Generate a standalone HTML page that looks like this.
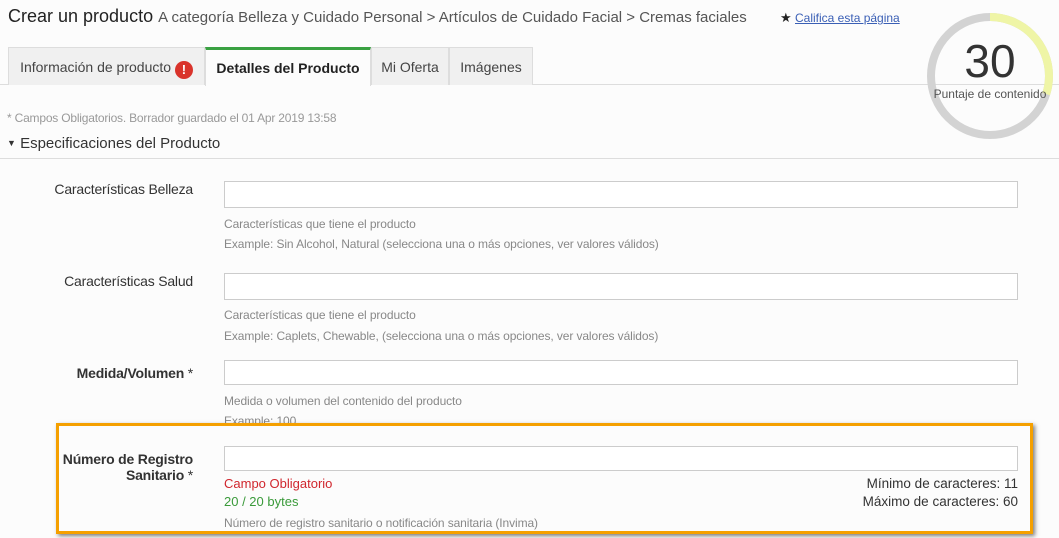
<!DOCTYPE html>
<html><head><meta charset="utf-8"><style>
*{margin:0;padding:0;box-sizing:border-box}
body{width:1059px;height:538px;overflow:hidden;background:#fcfcfc;font-family:"Liberation Sans",sans-serif;color:#333;position:relative}
.a{position:absolute;white-space:nowrap}
.lbl{position:absolute;right:866px;font-size:14px;color:#333;text-align:right;letter-spacing:-0.2px}
.inp{position:absolute;left:224px;width:794px;height:27px;border:1px solid #ccc;background:#fff}
.hint{position:absolute;left:224px;font-size:12px;color:#888;white-space:nowrap;letter-spacing:-0.1px}
.tab{position:absolute;top:47px;height:38px;border:1px solid #ddd;border-bottom:none;background:#f0f0f0;font-size:14px;color:#444;padding-top:11px;text-align:center}
</style></head><body>
<div class="a" style="left:8px;top:6px;font-size:18px;color:#222">Crear un producto <span style="font-size:15px;color:#555">A categoría Belleza y Cuidado Personal &gt; Artículos de Cuidado Facial &gt; Cremas faciales</span></div>
<div class="a" style="left:780px;top:10px;font-size:12px"><span style="color:#222;font-size:13px">★</span> <span style="color:#3a5fb5;text-decoration:underline">Califica esta página</span></div>

<div class="a" style="left:0;top:84px;width:1059px;height:1px;background:#ddd"></div>
<div class="tab" style="left:8px;width:197px">Información de producto <span style="display:inline-block;width:18px;height:18px;border-radius:50%;background:#d9332b;color:#fff;font-weight:bold;font-size:13px;line-height:18px;vertical-align:-2px">!</span></div>
<div class="tab" style="left:205px;width:166px;background:#fcfcfc;border-top:3px solid #3aa142;font-weight:bold;color:#222;padding-top:10px;height:39px">Detalles del Producto</div>
<div class="tab" style="left:371px;width:78px">Mi Oferta</div>
<div class="tab" style="left:449px;width:84px">Imágenes</div>

<svg class="a" style="left:922px;top:8px" width="136" height="136" viewBox="0 0 136 136">
<circle cx="68" cy="68" r="59" fill="none" stroke="#d3d3d3" stroke-width="8"/>
<circle cx="68" cy="68" r="59" fill="none" stroke="#eff5a6" stroke-width="8" stroke-dasharray="111 400" transform="rotate(-90 68 68)"/>
</svg>
<div class="a" style="left:922px;top:34px;width:136px;text-align:center;font-size:46px;color:#333">30</div>
<div class="a" style="left:922px;top:87px;width:136px;text-align:center;font-size:12px;color:#555">Puntaje de contenido</div>

<div class="a" style="left:7px;top:111px;font-size:12px;color:#999;letter-spacing:-0.2px">* Campos Obligatorios. Borrador guardado el 01 Apr 2019 13:58</div>
<div class="a" style="left:7px;top:135px;font-size:15px;color:#333"><span style="font-size:9px;vertical-align:2px">▼</span> Especificaciones del Producto</div>
<div class="a" style="left:0;top:158px;width:1059px;height:1px;background:#ddd"></div>

<div class="lbl" style="top:181px">Características Belleza</div>
<div class="inp" style="top:181px"></div>
<div class="hint" style="top:217px">Características que tiene el producto</div>
<div class="hint" style="top:237px">Example: Sin Alcohol, Natural (selecciona una o más opciones, ver valores válidos)</div>

<div class="lbl" style="top:273px">Características Salud</div>
<div class="inp" style="top:273px"></div>
<div class="hint" style="top:308px">Características que tiene el producto</div>
<div class="hint" style="top:329px">Example: Caplets, Chewable, (selecciona una o más opciones, ver valores válidos)</div>

<div class="lbl" style="top:365px;font-weight:bold">Medida/Volumen <span style="font-weight:normal">*</span></div>
<div class="inp" style="top:360px;height:25px"></div>
<div class="hint" style="top:394px">Medida o volumen del contenido del producto</div>
<div class="hint" style="top:414px">Example: 100</div>

<div class="a" style="left:56px;top:423px;width:977px;height:111px;border:3px solid #f5a000;background:#fcfcfc;box-shadow:2px 2px 4px rgba(0,0,0,.5)"></div>
<div class="lbl" style="top:451px;font-weight:bold;line-height:16px">Número de Registro<br>Sanitario <span style="font-weight:normal">*</span></div>
<div class="inp" style="top:446px;height:25px"></div>
<div class="a" style="left:224px;top:476px;font-size:13px;color:#d0262d">Campo Obligatorio</div>
<div class="a" style="left:224px;top:494px;font-size:13px;color:#3a9a3a">20 / 20 bytes</div>
<div class="a" style="right:41px;top:476px;font-size:13.5px;color:#333">Mínimo de caracteres: 11</div>
<div class="a" style="right:41px;top:494px;font-size:13.5px;color:#333">Máximo de caracteres: 60</div>
<div class="hint" style="top:516px">Número de registro sanitario o notificación sanitaria (Invima)</div>
</body></html>
